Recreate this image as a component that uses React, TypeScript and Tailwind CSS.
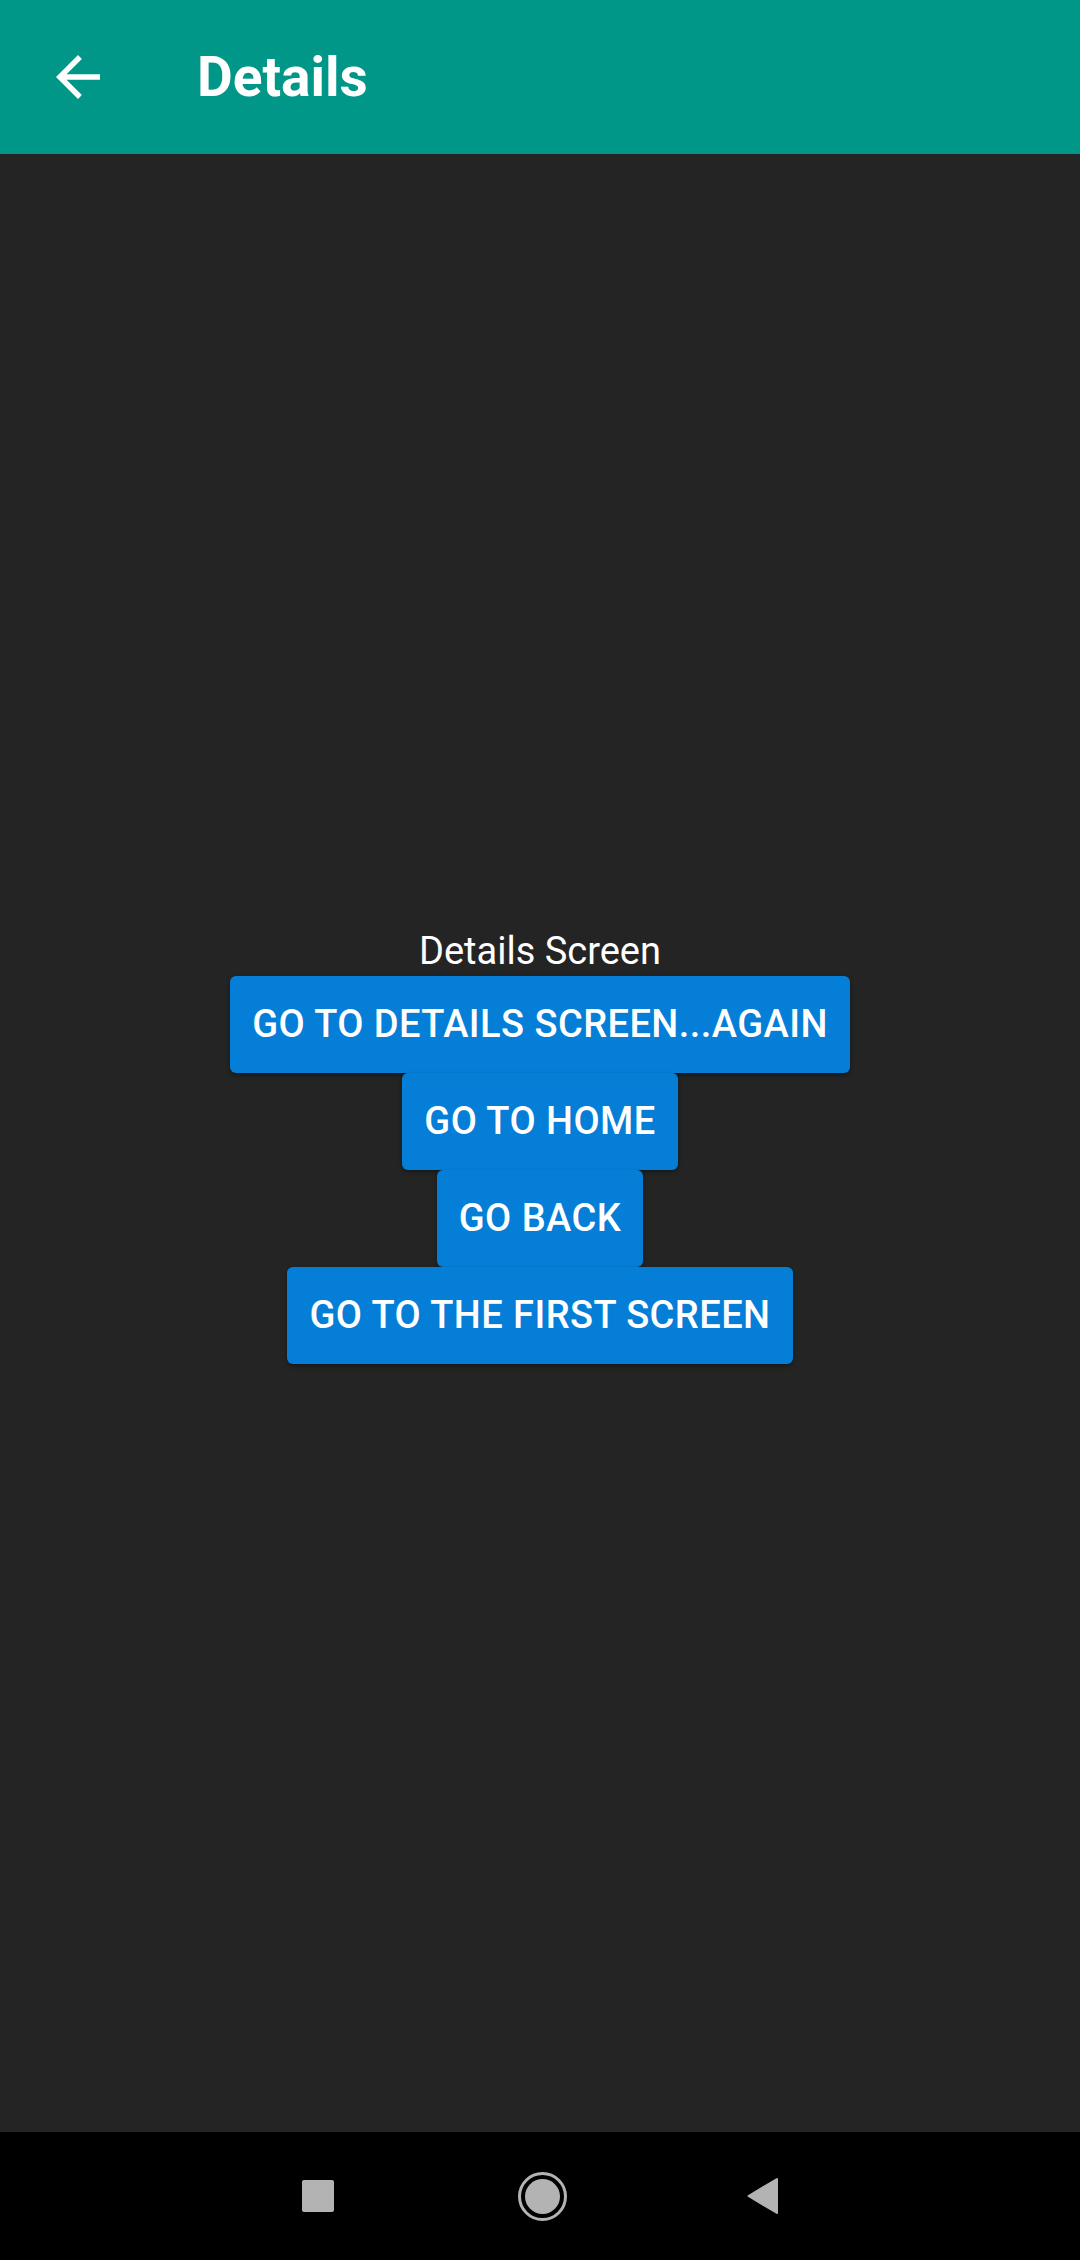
import React from "react";

const BUTTONS = [
  "GO TO DETAILS SCREEN...AGAIN",
  "GO TO HOME",
  "GO BACK",
  "GO TO THE FIRST SCREEN",
];

function BackArrow() {
  return (
    <svg width="66" height="66" viewBox="0 0 24 24">
      <path
        d="M20 11H7.83l5.59-5.59L12 4l-8 8 8 8 1.41-1.41L7.83 13H20v-2z"
        fill="#ffffff"
      />
    </svg>
  );
}

export default function App() {
  return (
    <div
      className="w-[1080px] h-[2260px] flex flex-col bg-[#242424]"
      style={{ fontFamily: "Roboto, 'Noto Sans', sans-serif" }}
    >
      <header className="h-[154px] bg-[#009688] flex items-center shrink-0">
        <div className="w-[197px] pl-[45px] flex items-center">
          <BackArrow />
        </div>
        <h1 className="text-white font-bold text-[55px] leading-none">
          Details
        </h1>
      </header>

      <main className="flex-1 flex flex-col items-center justify-center pt-[6px]">
        <p className="text-white text-[38px] leading-[46px] mb-[2px]">Details Screen</p>
        {BUTTONS.map((label) => (
          <button
            key={label}
            className="h-[97px] px-[22px] rounded-[6px] bg-[#047ed7] text-white font-medium text-[38px] tracking-[0.012em] shadow-[0_2px_4px_rgba(0,0,0,0.35)]"
          >
            {label}
          </button>
        ))}
      </main>

      <nav className="h-[128px] bg-black flex items-center justify-center shrink-0">
        <div className="w-[32px] h-[32px] rounded-[2px] bg-[#b3b3b3]" />
        <div className="ml-[184px] w-[49px] h-[49px] rounded-full border-[3px] border-[#b3b3b3] flex items-center justify-center">
          <div className="w-[35px] h-[35px] rounded-full bg-[#b3b3b3]" />
        </div>
        <svg className="ml-[180px]" width="31" height="36" viewBox="0 0 31 36">
          <path d="M30 1 L1.5 18 L30 35 Z" fill="#b3b3b3" stroke="#b3b3b3" strokeLinejoin="round" strokeWidth="2" />
        </svg>
      </nav>
    </div>
  );
}
